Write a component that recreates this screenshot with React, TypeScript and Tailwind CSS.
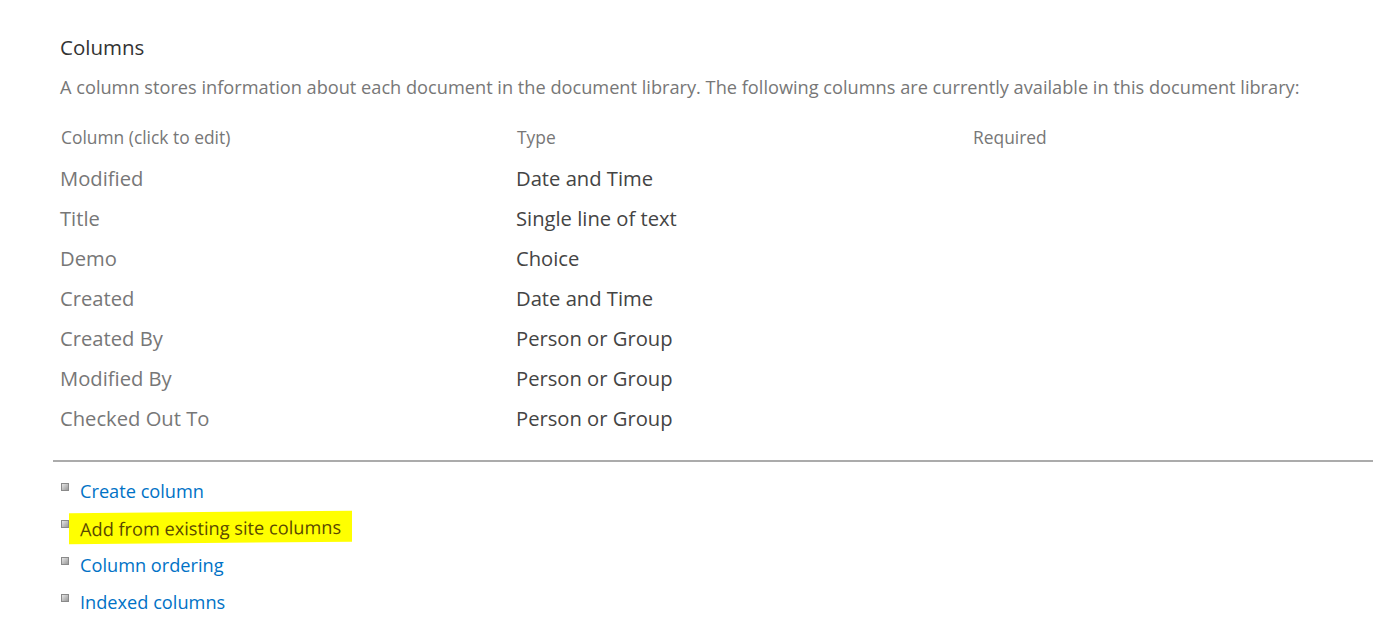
import React from "react";

const rows: [string, string][] = [
  ["Modified", "Date and Time"],
  ["Title", "Single line of text"],
  ["Demo", "Choice"],
  ["Created", "Date and Time"],
  ["Created By", "Person or Group"],
  ["Modified By", "Person or Group"],
  ["Checked Out To", "Person or Group"],
];

const links = [
  "Create column",
  "Add from existing site columns",
  "Column ordering",
  "Indexed columns",
];

const Bullet = () => (
  <span className="inline-block shrink-0 w-[8px] h-[8px] border border-[#8a8a8a] bg-gradient-to-br from-[#e6e6e6] to-[#9a9a9a] mt-[5px]" />
);

export default function App() {
  return (
    <div className="w-[1373px] h-[638px] bg-white overflow-hidden font-['Open_Sans',sans-serif]">
      <div className="pl-[60px] pt-[34px]">
        <h2 className="text-[20.5px] leading-[26px] text-[#333]">Columns</h2>
        <p className="mt-[14px] text-[18.2px] leading-[26px] text-[#777] whitespace-nowrap">
          A column stores information about each document in the document library. The following columns are currently available in this document library:
        </p>
        <div className="mt-[26px] grid grid-cols-[456px_457px_1fr] text-[17.4px] leading-[22px] text-[#777]">
          <div className="pl-px">Column (click to edit)</div>
          <div className="pl-px">Type</div>
          <div>Required</div>
        </div>
        <div className="mt-[10px]">
          {rows.map(([name, type]) => (
            <div
              key={name}
              className="grid grid-cols-[456px_457px_1fr] h-[40px] items-center text-[20.2px]"
            >
              <span className="text-[#777]">{name}</span>
              <span className="text-[#444]">{type}</span>
              <span />
            </div>
          ))}
        </div>
      </div>
      <div className="ml-[53px] mt-[22px] h-[2px] bg-[#ababab]" />
      <ul className="pl-[61px] pt-[16px]">
        {links.map((l, i) => (
          <li key={l} className="flex items-start h-[37px]">
            <Bullet />
            <span
              className={
                i === 1
                  ? "ml-[0px] pl-[11px] pr-[11px] -mt-[3px] pt-[3px] h-[31px] bg-[#ffff00] text-[#5a4800] text-[18.2px] leading-[26px] -skew-y-[0.5deg]"
                  : "ml-[11px] text-[#0072c6] text-[18.2px] leading-[26px]"
              }
            >
              {l}
            </span>
          </li>
        ))}
      </ul>
    </div>
  );
}
